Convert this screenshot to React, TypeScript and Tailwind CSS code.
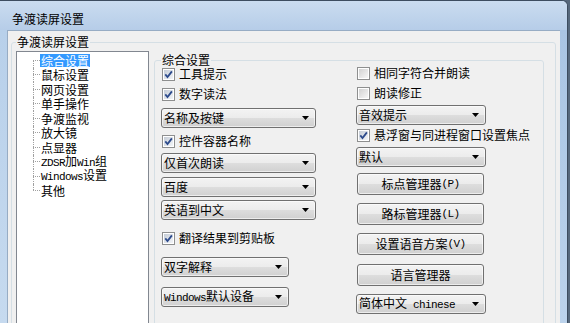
import React from "react";

const mono = "font-['Liberation_Mono',monospace] text-[11px] tracking-[-0.6px]";

function Check({ checked }: { checked: boolean }) {
  return (
    <span className="w-[13px] h-[13px] shrink-0 border border-[#8e8f8f] bg-white p-[1px] flex">
      <span
        className={
          checked
            ? "flex-1 flex items-center justify-center bg-gradient-to-br from-[#c5ccd6] to-[#f3f5f8]"
            : "flex-1 flex items-center justify-center bg-gradient-to-br from-[#d2d2d2] to-[#f7f7f7]"
        }
      >
        {checked && (
          <svg width="9" height="9" viewBox="0 0 9 9">
            <path d="M1.3 4.4 L3.5 7 L7.9 1.4" stroke="#2d4b8c" strokeWidth="1.8" fill="none" />
          </svg>
        )}
      </span>
    </span>
  );
}

function CheckRow({ checked, label, className = "" }: { checked: boolean; label: React.ReactNode; className?: string }) {
  return (
    <div className={`h-[14px] flex items-center gap-[4px] pl-[1px] whitespace-nowrap ${className}`}>
      <Check checked={checked} />
      <span className="leading-[14px]">{label}</span>
    </div>
  );
}

const grad = "bg-[linear-gradient(#f3f3f3,#ececec_48%,#dddddd_52%,#d0d0d0)]";

function Drop({ label, className = "" }: { label: React.ReactNode; className?: string }) {
  return (
    <div
      className={`h-[20px] shrink-0 border border-[#707070] rounded-[3px] ${grad} shadow-[inset_0_0_0_1px_rgba(255,255,255,0.6)] flex items-center pl-[2px] pr-[6px] ${className}`}
    >
      <span className="flex-1 leading-[16px] whitespace-nowrap">{label}</span>
      <svg width="7" height="4" viewBox="0 0 7 4" className="shrink-0">
        <polygon points="0,0 7,0 3.5,4" fill="#000" />
      </svg>
    </div>
  );
}

function Btn({ label, className = "" }: { label: React.ReactNode; className?: string }) {
  return (
    <div
      className={`h-[22px] w-[127px] ml-[1px] shrink-0 border border-[#707070] rounded-[3px] ${grad} shadow-[inset_0_0_0_1px_rgba(255,255,255,0.6)] flex items-center justify-center leading-[16px] whitespace-nowrap ${className}`}
    >
      {label}
    </div>
  );
}

const treeItems: React.ReactNode[] = [
  "综合设置",
  "鼠标设置",
  "网页设置",
  "单手操作",
  "争渡监视",
  "放大镜",
  "点显器",
  <>
    <span className={mono}>ZDSR</span>加<span className={mono}>Win</span>组
  </>,
  <>
    <span className={mono}>Windows</span>设置
  </>,
  "其他",
];

export default function App() {
  return (
    <div className="w-[570px] h-[323px] overflow-hidden bg-[#56687c] font-['Noto_Sans_CJK_SC','Noto_Sans',sans-serif] text-[12px] text-black">
      <div className="w-[568px] h-[323px] flex flex-col border-t border-r border-[#3d4d60] rounded-tr-[6px] overflow-hidden bg-[#bfd5ed]">
        {/* Title bar */}
        <div className="h-[29px] shrink-0 flex items-center pl-[12px] pt-[6px] bg-gradient-to-b from-[#cadcf0] to-[#b6cde8]">
          <span className="leading-[14px]">争渡读屏设置</span>
        </div>
        <div className="flex flex-1 min-h-0">
          <div className="w-[7px] shrink-0 bg-gradient-to-b from-[#b8d0ea] to-[#c6daef]" />
          <div className="w-[553px] shrink-0 bg-[#f0f0f0] border-l border-t border-[#97acc4] overflow-hidden">
            <fieldset className="ml-[3px] mt-[4px] w-[545px] border border-[#d5dfe5] rounded-[3px] px-[4px] pt-[2px]">
              <legend className="px-[1px] leading-[14px]">争渡读屏设置</legend>
              <div className="flex items-start">
                {/* Tree */}
                <div className="w-[133px] h-[290px] shrink-0 border border-[#828790] bg-white pt-[1px]">
                  {treeItems.map((it, i) => {
                    const first = i === 0;
                    const last = i === treeItems.length - 1;
                    return (
                      <div key={i} className="flex h-[14.5px] items-stretch">
                        <div className="w-[16px] shrink-0" />
                        <div className="w-[7px] shrink-0 flex flex-col">
                          <div className={`flex-1 border-dotted border-[#a0a0a0] ${first ? "" : "border-l"}`} />
                          <div className={`flex-1 border-dotted border-[#a0a0a0] border-t ${last ? "" : "border-l"}`} />
                        </div>
                        <div className="flex items-center pl-[1px] whitespace-nowrap">
                          <span
                            className={
                              first
                                ? "-ml-[1px] px-[1px] leading-[13px] bg-[#3399ff] text-white"
                                : "leading-[13px]"
                            }
                          >
                            {it}
                          </span>
                        </div>
                      </div>
                    );
                  })}
                </div>
                {/* Inner group */}
                <fieldset className="ml-[5px] mt-[3px] w-[390px] h-[280px] shrink-0 border border-[#d5dfe5] rounded-[3px] pl-[6px]">
                  <legend className="px-[1px] leading-[12px]">综合设置</legend>
                  <div className="flex items-start">
                    <div className="w-[155px] shrink-0 flex flex-col">
                      <CheckRow className="mt-[1px]" checked label="工具提示" />
                      <CheckRow className="mt-[6px]" checked label="数字读法" />
                      <Drop className="mt-[7px] w-[155px]" label="名称及按键" />
                      <CheckRow className="mt-[6px]" checked label="控件容器名称" />
                      <Drop className="mt-[5px] w-[155px]" label="仅首次朗读" />
                      <Drop className="mt-[4px] w-[155px]" label="百度" />
                      <Drop className="mt-[3px] w-[155px]" label="英语到中文" />
                      <CheckRow className="mt-[11px]" checked label="翻译结果到剪贴板" />
                      <Drop className="mt-[12px] w-[128px]" label="双字解释" />
                      <Drop
                        className="mt-[10px] w-[128px]"
                        label={
                          <>
                            <span className={mono}>Windows</span>默认设备
                          </>
                        }
                      />
                    </div>
                    <div className="ml-[40px] w-[130px] shrink-0 flex flex-col">
                      <CheckRow checked={false} label="相同字符合并朗读" />
                      <CheckRow className="mt-[6px]" checked={false} label="朗读修正" />
                      <Drop className="mt-[5px] w-[130px]" label="音效提示" />
                      <CheckRow className="mt-[3px]" checked label="悬浮窗与同进程窗口设置焦点" />
                      <Drop className="mt-[5px] w-[130px]" label="默认" />
                      <Btn
                        className="mt-[6px]"
                        label={
                          <>
                            标点管理器<span className={mono}>(P)</span>
                          </>
                        }
                      />
                      <Btn
                        className="mt-[8px]"
                        label={
                          <>
                            路标管理器<span className={mono}>(L)</span>
                          </>
                        }
                      />
                      <Btn
                        className="mt-[8px]"
                        label={
                          <>
                            设置语音方案<span className={mono}>(V)</span>
                          </>
                        }
                      />
                      <Btn className="mt-[9px]" label="语言管理器" />
                      <Drop
                        className="mt-[8px] w-[130px]"
                        label={
                          <>
                            简体中文<span className={mono}> chinese</span>
                          </>
                        }
                      />
                    </div>
                  </div>
                </fieldset>
              </div>
            </fieldset>
          </div>
          <div className="w-[7px] shrink-0 bg-gradient-to-b from-[#a9c5e4] to-[#bcd3ec]" />
        </div>
      </div>
    </div>
  );
}
